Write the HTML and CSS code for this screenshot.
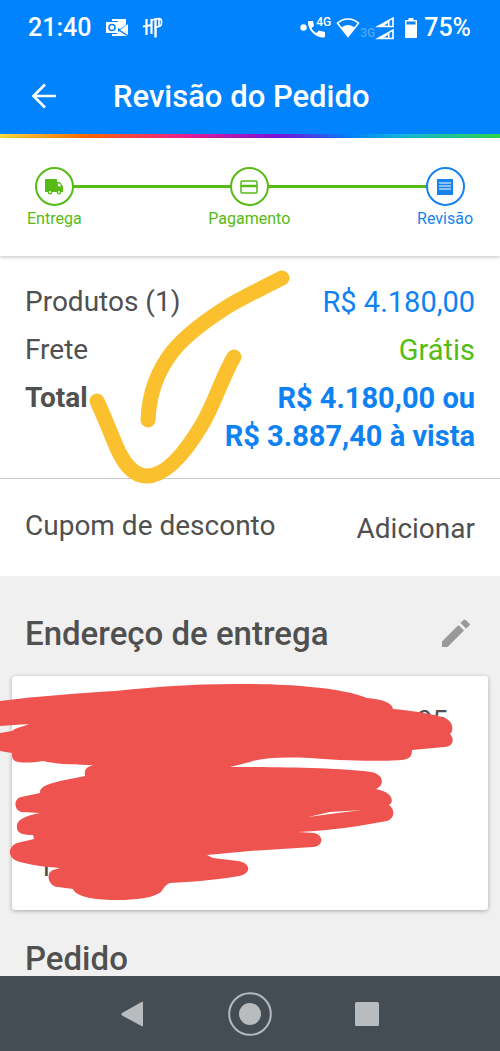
FILE: index.html
```html
<!DOCTYPE html>
<html lang="pt-BR">
<head>
<meta charset="utf-8">
<meta name="viewport" content="width=device-width, initial-scale=1">
<title>Revisão do Pedido</title>
<link rel="stylesheet" href="styles.css">
</head>
<body>
<div class="screen">
  <header class="top">
    <div class="status">
      <div class="status-group">
        <span>21:40</span>
        <svg class="icon-mail" width="24" height="20" viewBox="0 0 24 20" aria-hidden="true">
          <path d="M6 1h14v6l-6 4-2-1V3H6zM22 6v11l-8-5zM6 16h5l2-3 8 5H6z" fill="#fff"/>
          <path d="M0 4h12v11H0z" fill="#fff"/>
          <circle cx="6" cy="9.500" r="3" fill="none" stroke="#0083fd" stroke-width="1.500"/>
        </svg>
        <svg class="icon-app" width="22" height="22" viewBox="0 0 22 22" fill="none" stroke="#fff" aria-hidden="true">
          <path d="M4.500 2v16M9.500 2v15M1 9.500l9-1.500" stroke-width="2.200"/>
          <path d="M13.500 1v19.500" stroke-width="2.400"/>
          <path d="M10 3l7-1.500c3.500 0 3.500 7 0 8l-4 1" stroke-width="1.600"/>
          <path d="M17 2v7" stroke-width="1.600"/>
        </svg>
      </div>
      <div class="status-group status-right">
        <svg width="26" height="24" viewBox="0 0 26 24" fill="#fff" aria-hidden="true">
          <circle cx="3.500" cy="11.500" r="3.200"/>
          <path d="M9 5h4l1 5-2.500 2c1.300 2.600 2.600 3.900 5 5l2.200-2.500 6.300 1.500v4c0 1-.6 1.500-1.500 1.500C15 21.500 8 14 8 6.500 8 5.500 8.200 5 9 5z"/>
        </svg>
        <span class="net net-4g">4G</span>
        <svg width="24" height="22" viewBox="0 0 24 22" aria-hidden="true">
          <path d="M1.500 6.200C7.500.6 16.500.6 22.500 6.200L12 19.500z" fill="none" stroke="#fff" stroke-width="1.700"/>
          <path d="M5.500 10.500c3.700-3.400 9.300-3.400 13 0L12 19.500z" fill="#fff"/>
        </svg>
        <span class="net net-3g">3G</span>
        <svg class="icon-signal" width="20" height="24" viewBox="0 0 20 24" fill="none" stroke="#fff" stroke-width="1.600" aria-hidden="true">
          <path d="M3 10.500L18 2v8.500zM3 22.500L18 14v8.500z"/>
          <path d="M3 10.500L14.500 4v6.500zM3 22.500L14.500 16v6.500z" fill="#fff" stroke="none"/>
          <path d="M9 9.500l4-2.500v2.500zM9 21.500l4-2.500v2.500z" fill="#0083fd" stroke="none"/>
        </svg>
        <svg class="icon-battery" width="12" height="22" viewBox="0 0 12 22" aria-hidden="true">
          <path d="M3.500 1h5v2H11c.6 0 1 .4 1 1v16c0 .6-.4 1-1 1H1c-.6 0-1-.4-1-1V4c0-.6.400-1 1-1h2.500z" fill="#fff"/>
          <path d="M1.500 4.500h9v3h-9z" fill="#0083fd"/>
        </svg>
        <span>75%</span>
      </div>
    </div>
    <div class="appbar">
      <button class="back" type="button" aria-label="Voltar">
        <svg width="28" height="28" viewBox="0 0 28 28" fill="none" stroke="#fff" stroke-width="2.600" aria-hidden="true"><path d="M26 13H4M15 1.500L3.500 13 15 24.500"/></svg>
      </button>
      <h1 class="title">Revisão do Pedido</h1>
    </div>
    <div class="rainbow"></div>
  </header>

  <nav class="stepper" aria-label="Etapas">
    <ol class="steps">
      <li class="step">
        <span class="dot"><svg width="20" height="18" viewBox="0 0 20 18" fill="currentColor" aria-hidden="true"><path d="M2 1h10a1 1 0 0 1 1 1v2h3l3 4.500V14H1V2a1 1 0 0 1 1-1z"/><circle cx="6" cy="14" r="2.400"/><circle cx="15" cy="14" r="2.400"/><path d="M14 5.500h1.500l1.700 2.700H14z" fill="#fff"/><circle cx="6" cy="14" r="1" fill="#fff"/><circle cx="15" cy="14" r="1" fill="#fff"/></svg></span>
        <span>Entrega</span>
      </li>
      <li class="step">
        <span class="dot"><svg width="20" height="18" viewBox="0 0 20 18" fill="none" stroke="currentColor" aria-hidden="true"><rect x="2" y="3" width="16" height="12" rx="1" stroke-width="1.500"/><path d="M2 8h16" stroke-width="2.500"/></svg></span>
        <span>Pagamento</span>
      </li>
      <li class="step current" aria-current="step">
        <span class="dot"><svg width="18" height="18" viewBox="0 0 18 18" aria-hidden="true"><path d="M1 1h16v16H1z" fill="currentColor"/><path d="M3 5h12M3 8h12M3 11h12" stroke="#fff" stroke-width="1.200"/></svg></span>
        <span>Revisão</span>
      </li>
    </ol>
  </nav>

  <main class="content">
    <section class="summary">
      <dl class="totals">
        <div class="row"><dt>Produtos (1)</dt><dd class="price">R$ 4.180,00</dd></div>
        <div class="row"><dt>Frete</dt><dd class="free">Grátis</dd></div>
        <div class="row total"><dt>Total</dt><dd class="price">R$ 4.180,00 ou<br>R$ 3.887,40 à vista</dd></div>
      </dl>
      <svg class="mark" width="300" height="230" viewBox="0 256 300 230" fill="none" stroke="#fbc02d" stroke-width="15" stroke-linecap="round" stroke-linejoin="round" aria-hidden="true">
        <path d="M282 278C264 287 244 297 230 305C206 320 186 335 173 351C157 371 149 396 148 420"/>
        <path d="M97 401C104 416 109 429 114 441C123 464 133 476 147 476C169 476 190 445 203 423C215 402 224 373 234 357"/>
      </svg>
    </section>
    <section class="coupon">
      <span>Cupom de desconto</span>
      <button class="add" type="button">Adicionar</button>
    </section>

    <section class="details">
      <div class="heading-row">
        <h2 class="heading">Endereço de entrega</h2>
        <button class="edit" type="button" aria-label="Editar endereço">
          <svg width="30" height="30" viewBox="0 0 30 30" fill="#999" aria-hidden="true"><path d="M1 22.500L17.500 6l5.500 5.500L6.500 28H1zM19.500 4l3-3c.7-.7 1.500-.7 2.200 0l3.600 3.600c.7.7.7 1.500 0 2.200L25 9.500z"/></svg>
        </button>
      </div>
      <div class="card">
        <p class="card-end">05</p>
        <p>T</p>
        <svg class="scribble" width="460" height="230" viewBox="0 676 460 230" aria-hidden="true">
          <path fill="#ef5350" fill-rule="evenodd" d="M0 701C40 696 80 693 115 691C155 687 190 684 235 684C270 684 290 685 310 687C335 689 355 693 367 698C380 699 392 702 393 709C415 711 435 714 447 719C453 723 454 730 450 734C455 739 453 747 444 747L412 750C412 756 410 759 402 760C370 762 335 760 310 758C285 757 265 757 250 762L230 767C280 767 340 768 371 772C384 774 385 786 376 789C392 792 395 801 389 805C396 810 394 819 387 821C360 826 335 830 298 832L314 833C324 835 324 846 313 847L250 851L207 855L213 858L238 861C251 863 252 874 239 876C215 880 190 882 170 883C165 885 164 888 161 892C153 898 136 900 117 900C100 900 76 898 73 889L58 887C47 886 46 872 53 870L60 868C45 867 31 865 20 862C7 859 7 847 17 843L34 839L33 835C20 835 16 832 17 825C18 818 30 815 40 813L22 812C14 811 13 799 21 797L40 793C39 786 50 784 60 781L85 776C84 770 86 767 93 765C75 765 55 764 43 761C30 763 20 763 15 761C12 759 12 756 12 753L0 751V733L12 731C15 728 22 727 29 724L0 726ZM308 817L330 812L362 810L330 814Z"/>
        </svg>
      </div>
      <h2 class="heading">Pedido</h2>
    </section>
  </main>

  <footer class="sysnav">
    <button class="sys" type="button" aria-label="Voltar"><svg width="44" height="44" viewBox="0 0 44 44" aria-hidden="true"><path d="M12 21.500L32.500 10v24L12 23z" fill="#b8bcbe" stroke="#b8bcbe" stroke-linejoin="round"/></svg></button>
    <button class="sys" type="button" aria-label="Início"><svg width="44" height="44" viewBox="0 0 44 44" aria-hidden="true"><circle cx="22" cy="22" r="20.800" fill="none" stroke="#b4b8c0" stroke-width="2"/><circle cx="22" cy="22" r="11" fill="#b8bcbe"/></svg></button>
    <button class="sys" type="button" aria-label="Recentes"><svg width="44" height="44" viewBox="0 0 44 44" aria-hidden="true"><rect x="9" y="10" width="24" height="24" rx="1.500" fill="#b8bcbe"/></svg></button>
  </footer>
</div>
</body>
</html>
```
FILE: styles.css
```css
* { box-sizing: border-box; }

body {
  margin: 0;
  font-family: Roboto, "Noto Sans", sans-serif;
  font-size: 28px;
  line-height: 38px;
  color: #505050;
  background: #f0f0f0;
}

h1, h2, p, dl, dd, ol { margin: 0; padding: 0; }

button {
  padding: 0;
  border: 0;
  background: none;
  color: inherit;
  font: inherit;
  cursor: pointer;
}

svg { display: block; flex: none; }

.screen {
  display: flex;
  flex-direction: column;
  min-height: 100vh;
}

.top { background: #0083fd; color: #fff; }

.status {
  display: flex;
  align-items: center;
  justify-content: space-between;
  height: 54px;
  padding: 1px 29px 0 28px;
  font-size: 25px;
  font-weight: 500;
}

.status-group { display: flex; align-items: center; }
.icon-mail { margin-left: 15px; }
.icon-app { margin-left: 12px; }
.icon-battery { margin: 0 7px 0 10px; }

.net { font-size: 12px; line-height: 16px; }
.net-4g { margin: 0 5px 12px -10px; }
.net-3g { margin-top: 10px; color: #4fa9fd; }

.appbar {
  display: flex;
  align-items: center;
  height: 80px;
  padding: 5px 28px 0 30px;
}

.back { margin-right: 55px; }
.title { font-size: 31px; line-height: 34px; font-weight: 500; }

.rainbow {
  height: 4px;
  background: linear-gradient(90deg, #f5e03c 0, #ff6a00 17%, #f4208c 36%, #7a12e0 56%, #0083fd 70%, #14b8e0 80%, #2fd84a 100%);
}

.stepper {
  position: relative;
  z-index: 1;
  padding: 29px 27px 27px;
  background: #fff;
  box-shadow: 0 1px 4px rgba(0, 0, 0, 0.25);
}

.steps {
  position: relative;
  display: flex;
  justify-content: space-between;
  list-style: none;
}

.steps::before {
  content: "";
  position: absolute;
  top: 18px;
  left: 28px;
  right: 28px;
  height: 3px;
  background: #56bb14;
}

.step {
  position: relative;
  display: flex;
  flex-direction: column;
  align-items: center;
  gap: 3px;
  font-size: 16px;
  line-height: 20px;
  color: #56bb14;
}

.step.current { color: #1683ee; }

.dot {
  display: flex;
  align-items: center;
  justify-content: center;
  width: 39px;
  height: 39px;
  border: 2px solid currentColor;
  border-radius: 50%;
  background: #fff;
}

.content { flex: 1; }

.summary {
  position: relative;
  padding: 27px 25px 23px;
  border-bottom: 1px solid #c8c8c8;
  background: #fff;
}

.totals { display: flex; flex-direction: column; gap: 10px; }
.row { display: flex; justify-content: space-between; }
.row dd { font-size: 29px; text-align: right; }
.price { color: #0e82f2; }
.free { color: #56bb14; }
.total { font-weight: 700; }

.mark {
  position: absolute;
  top: 0;
  left: 0;
  pointer-events: none;
}

.coupon {
  display: flex;
  align-items: flex-start;
  justify-content: space-between;
  padding: 28px 25px 25px;
  background: #fff;
}

.add { line-height: 44px; }

.details { padding: 41px 12px 0; }

.heading-row {
  display: flex;
  align-items: center;
  justify-content: space-between;
  padding-right: 17px;
}

.heading {
  padding-left: 13px;
  font-size: 33px;
  line-height: 34px;
  font-weight: 500;
}

.card {
  position: relative;
  display: flex;
  flex-direction: column;
  justify-content: space-between;
  min-height: 234px;
  margin: 25px 0 32px;
  padding: 26px 40px 24px 26px;
  border-radius: 3px;
  background: #fff;
  box-shadow: 0 1px 4px rgba(0, 0, 0, 0.3);
}

.card-end { text-align: right; }

.scribble {
  position: absolute;
  top: 0;
  left: -12px;
  pointer-events: none;
}

.sysnav {
  display: flex;
  align-items: center;
  justify-content: center;
  gap: 74px;
  height: 75px;
  background: #454d54;
}
```
